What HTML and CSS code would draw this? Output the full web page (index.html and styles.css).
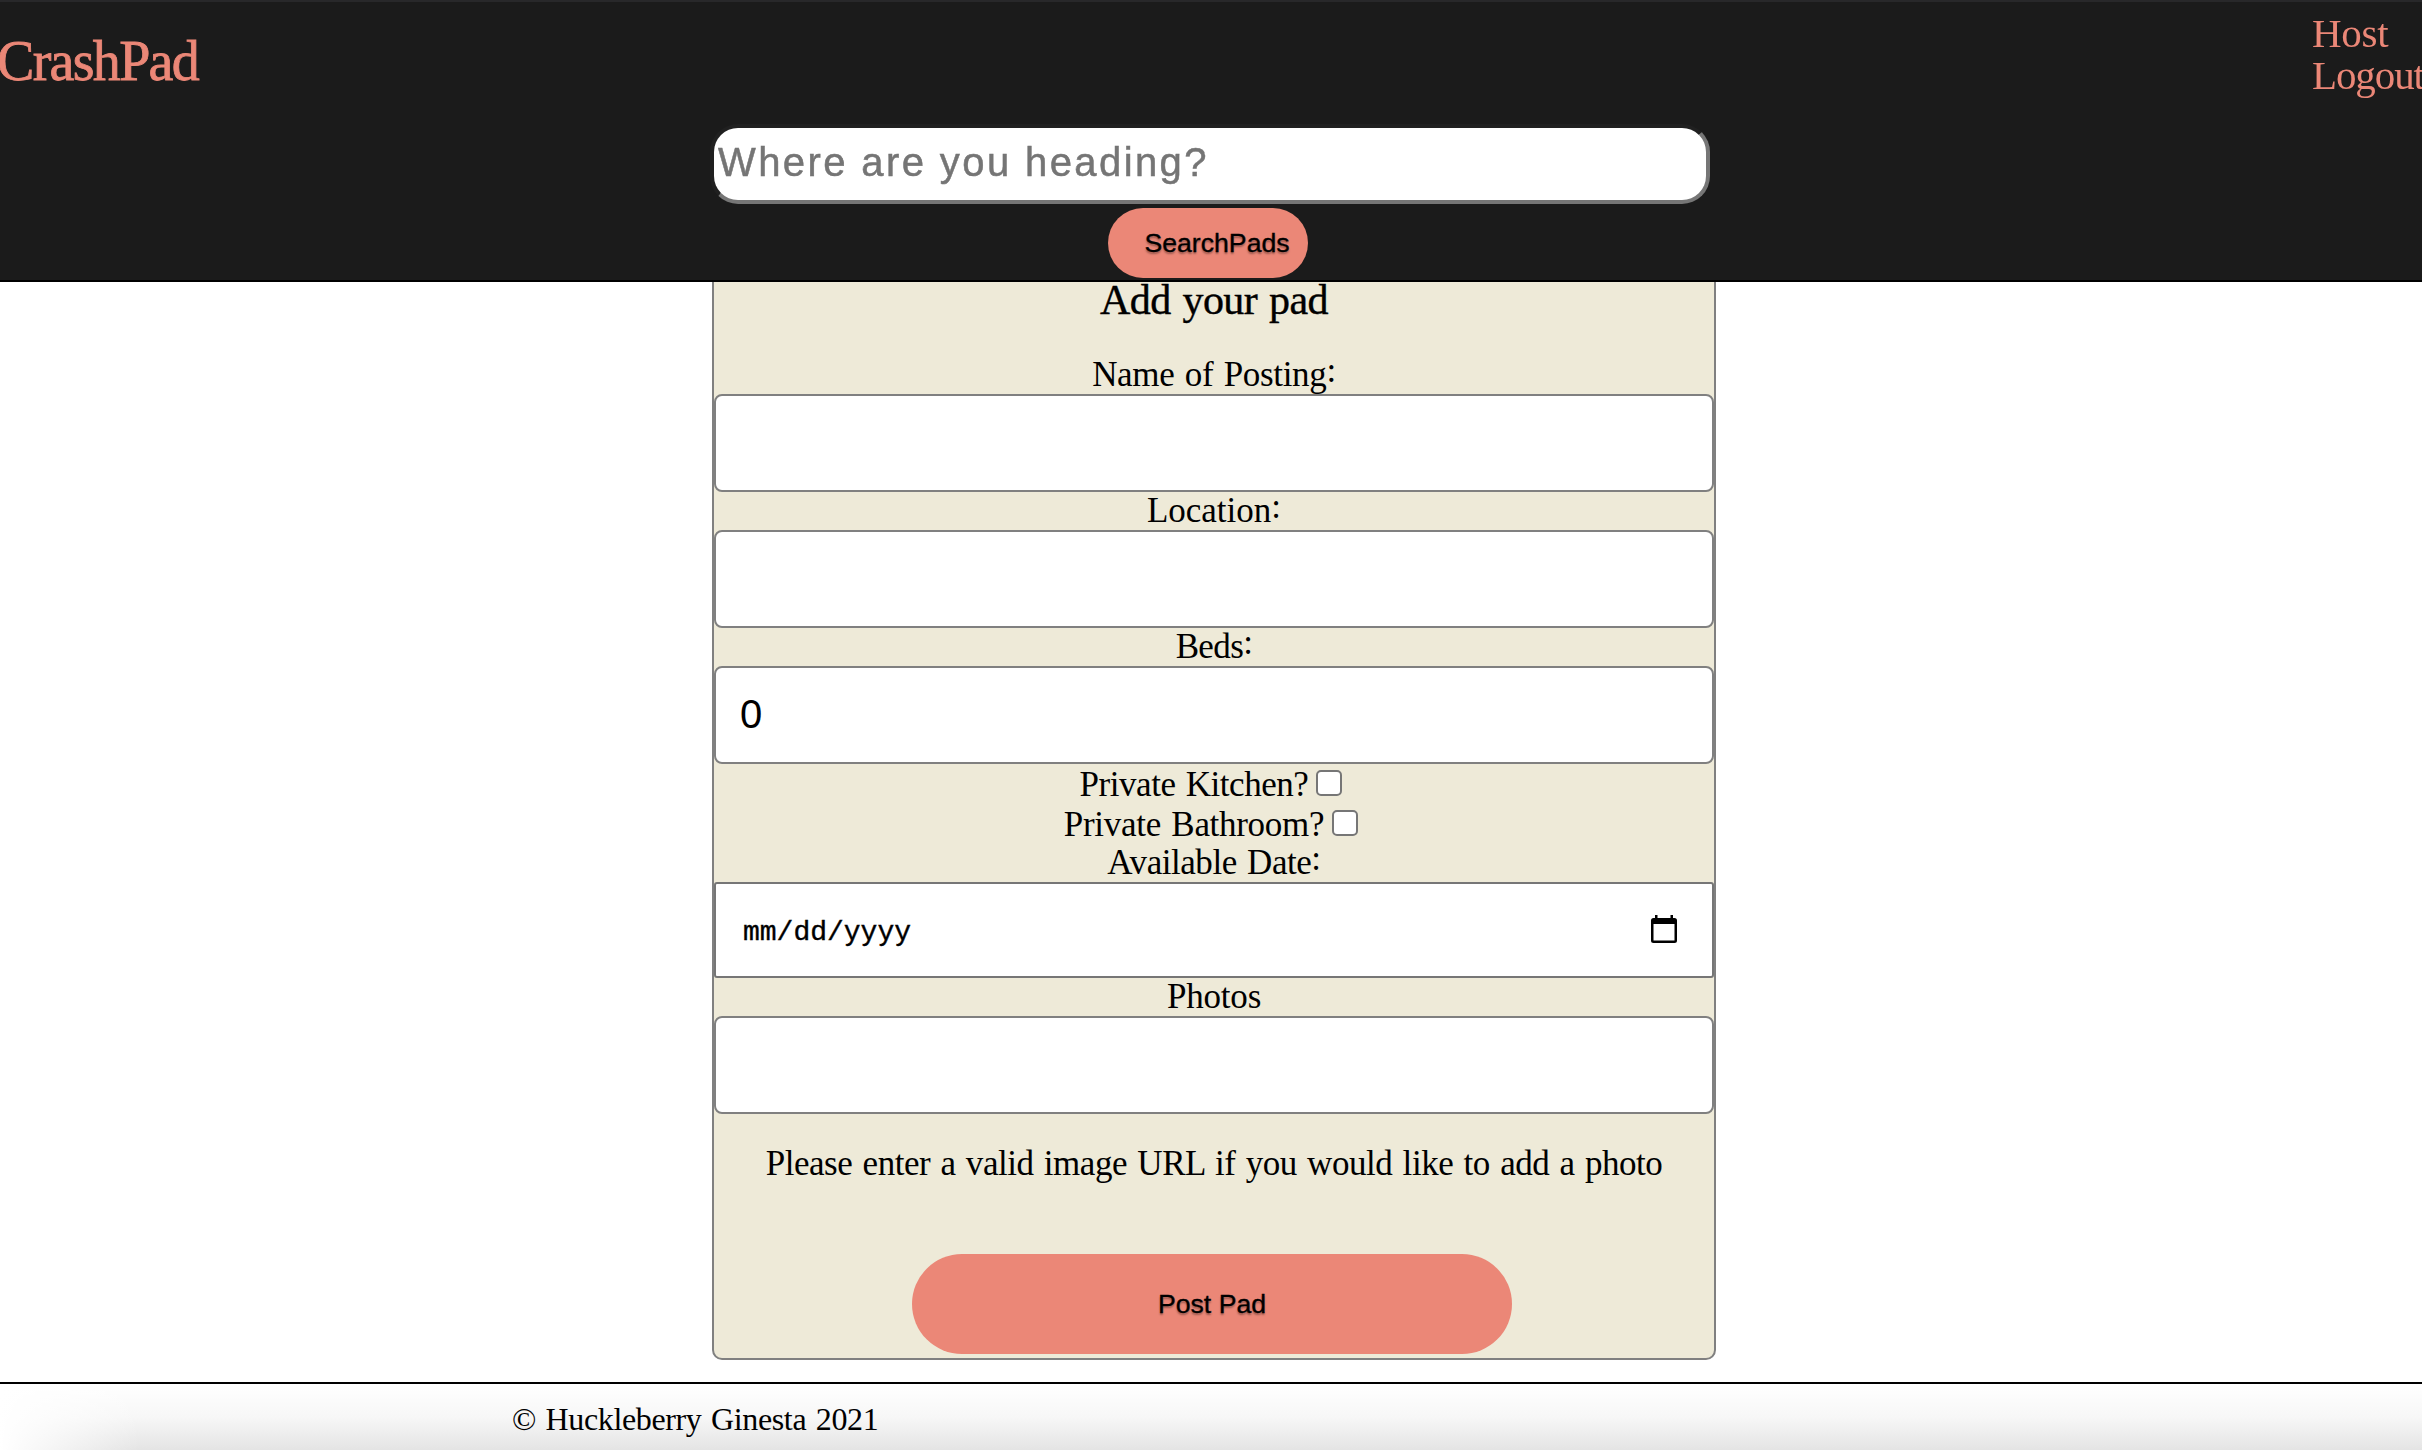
FILE: index.html
```html
<!DOCTYPE html>
<html lang="en">
<head>
<meta charset="utf-8">
<title>CrashPad</title>
<link rel="stylesheet" href="styles.css">
</head>
<body>
<header class="site-header">
  <div class="top-row">
    <a class="brand">CrashPad</a>
    <nav class="nav"><a class="host">Host</a><a class="logout">Logout</a></nav>
  </div>
  <form class="search">
    <input class="search-input" type="text" placeholder="Where are you heading?">
    <button class="btn search-btn" type="button">SearchPads</button>
  </form>
</header>
<main class="page">
  <form class="card">
    <h2 class="title">Add your pad</h2>
    <label class="label name">Name of Posting<span class="colon">:</span></label>
    <input class="field" type="text">
    <label class="label location">Location<span class="colon">:</span></label>
    <input class="field" type="text">
    <label class="label beds">Beds<span class="colon">:</span></label>
    <input class="field" type="text" value="0">
    <label class="check kitchen">Private Kitchen?<input class="box" type="checkbox"></label>
    <label class="check bathroom">Private Bathroom?<input class="box" type="checkbox"></label>
    <label class="label date">Available Date<span class="colon">:</span></label>
    <div class="field date-field">
      <span class="date-text">mm/dd/yyyy</span>
      <svg class="calendar" viewBox="0 0 26 28"><path d="M4 0h2.500v3h13V0H22v3h1.500a2.500 2.500 0 0 1 2.500 2.500v20a2.500 2.500 0 0 1-2.500 2.500h-21A2.500 2.500 0 0 1 0 25.500v-20A2.500 2.500 0 0 1 2.500 3H4zM2.500 9v16.500h21V9z" fill-rule="evenodd"/></svg>
    </div>
    <label class="label photos">Photos</label>
    <input class="field" type="text">
    <p class="hint">Please enter a valid image URL if you would like to add a photo</p>
    <button class="btn post-btn" type="button">Post Pad</button>
  </form>
</main>
<footer class="footer">© Huckleberry Ginesta 2021</footer>
</body>
</html>
```
FILE: styles.css
```css
* { box-sizing: border-box; }
html, body { height: 100%; }
body {
  margin: 0;
  overflow: hidden;
  background: #fff;
  color: #000;
  font-family: "Liberation Serif", serif;
  font-size: 35px;
  word-spacing: 2px;
}
.site-header {
  position: fixed;
  inset: 0 0 auto 0;
  z-index: 1;
  height: 282px;
  background: #1b1b1b;
  border-top: 2px solid #28282a;
  border-bottom: 2px solid #000;
  color: #eb8777;
}
.top-row { display: flex; justify-content: space-between; height: 122px; }
.brand { margin: 27px 0 0 -3px; font-size: 56px; line-height: 64px; letter-spacing: -1.7px; -webkit-text-stroke: .8px; }
.nav { display: flex; flex-direction: column; width: 110px; padding-top: 10px; font-size: 41px; line-height: 42px; }
.host { letter-spacing: -.3px; }
.logout { letter-spacing: -1.1px; }
.search { display: flex; flex-direction: column; align-items: center; gap: 4px; }
.search-input {
  width: 1000px;
  height: 80px;
  margin-right: 2px;
  padding: 0 4px 4px;
  border: 4px solid;
  border-color: #202020 #767676 #767676 #202020;
  border-radius: 28px;
  background: #fff;
  font: 40px "Liberation Sans", sans-serif;
  letter-spacing: 2.4px;
  word-spacing: 0;
}
.search-input::placeholder { color: #757575; -webkit-text-stroke: .5px #757575; }
.btn {
  flex: none;
  border: 0;
  background: #eb8777;
  color: #000;
  font: 26.67px "Liberation Sans", sans-serif;
  -webkit-text-stroke: .3px;
  text-shadow: 0 2px 2px rgba(0, 0, 0, .35);
}
.search-btn { width: 200px; height: 70px; margin-right: 6px; padding: 0 18px 0 36px; border-radius: 36px; white-space: nowrap; }
.page { display: flex; justify-content: center; height: 1382px; padding: 240px 0 22px 6px; }
.card {
  display: flex;
  flex-direction: column;
  align-items: center;
  width: 1004px;
  padding-top: 34px;
  border: 2px solid gray;
  border-radius: 10px;
  background: #eeead8;
}
.title { flex: none; height: 80px; margin: 0; font-size: 42px; font-weight: 400; line-height: 48px; letter-spacing: -.6px; -webkit-text-stroke: .4px; }
.label { flex: none; height: 38px; line-height: 37px; }
.name { letter-spacing: -.33px; }
.location { letter-spacing: 0; }
.beds { letter-spacing: -.6px; }
.date { letter-spacing: -.45px; }
.photos { letter-spacing: -.2px; }
.colon { position: relative; top: -4px; }
.field {
  flex: none;
  width: 1000px;
  height: 98px;
  padding: 0 24px 2px;
  border: 2px solid gray;
  border-radius: 8px;
  background: #fff;
  font: 40px "Liberation Sans", sans-serif;
}
.check { display: flex; flex: none; align-items: center; height: 40px; line-height: 41px; }
.kitchen { letter-spacing: -.46px; }
.bathroom { letter-spacing: -.3px; }
.box { appearance: none; width: 26px; height: 26px; margin: 0 6px 2px 8px; border: 2px solid #767676; border-radius: 5px; background: #fff; }
.date-field {
  display: flex;
  align-items: center;
  justify-content: space-between;
  height: 96px;
  padding: 0 35px 0 27px;
  border-color: #767676;
  border-radius: 3px;
}
.date-text { padding-top: 5px; font: 28px "Liberation Mono", monospace; -webkit-text-stroke: .4px; }
.calendar { width: 26px; height: 28px; margin-bottom: 2px; }
.hint { flex: none; margin: 30px 0 70px; line-height: 40px; letter-spacing: -.46px; white-space: nowrap; }
.post-btn { width: 600px; height: 100px; margin-right: 4px; border-radius: 50px; }
.footer {
  height: 68px;
  padding: 15px 0 0 512px;
  border-top: 2px solid #000;
  background: linear-gradient(90deg, #fff 0, rgba(255, 255, 255, 0) 140px), linear-gradient(#fff, #f7f7f7 50%, #e4e4e4);
  font-size: 32px;
  line-height: 41px;
  letter-spacing: -.37px;
}
```
